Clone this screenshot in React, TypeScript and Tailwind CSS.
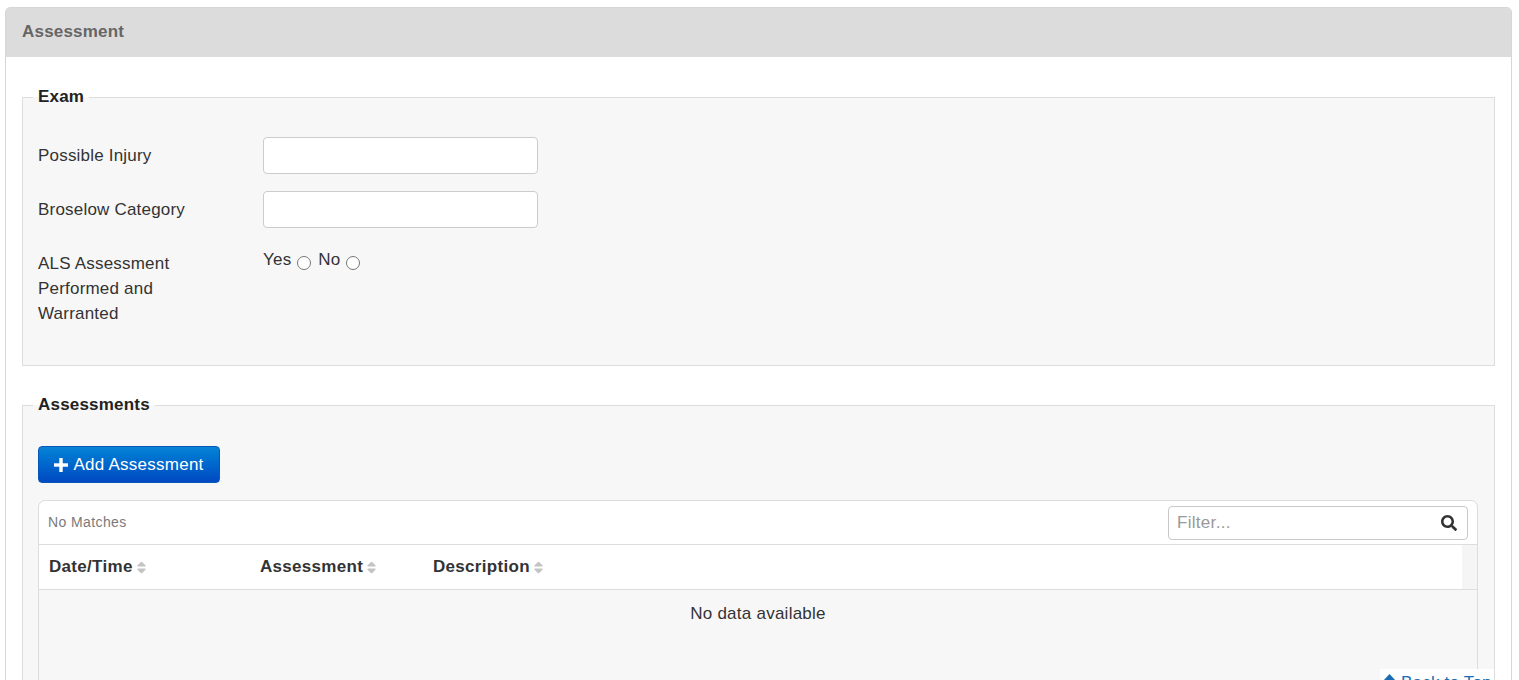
import React from "react";
import { FaSearch, FaSort } from "react-icons/fa";

function Radio() {
  return (
    <span className="inline-block w-[14px] h-[14px] rounded-full border border-[#767676] bg-white align-[-5px] ml-[6px] mr-[7px]" />
  );
}

function SortHeader({ label, width }: { label: string; width: string }) {
  return (
    <div className={`${width} flex items-center pl-[10px] shrink-0`}>
      <span className="text-[17px] tracking-[0.3px] font-bold text-[#333]">{label}</span>
      <FaSort className="ml-[3px] text-[#c4c4c4] w-[11px] h-[15px]" />
    </div>
  );
}

export default function App() {
  return (
    <div className="font-['Liberation_Sans',Arial,sans-serif] text-[#333] bg-white min-h-[700px] pt-[7px] pl-[5px]">
      <div className="w-[1507px] border border-[#d6d6d6] rounded-t-[5px] bg-white">
        <div className="h-[49px] bg-[#dcdcdc] rounded-t-[4px] flex items-center px-[16px] pb-[1px]">
          <span className="text-[17px] tracking-[0.2px] font-bold text-[#666]">Assessment</span>
        </div>
        <div className="px-[16px] pt-[30px] pb-[40px]">
          {/* Exam */}
          <fieldset className="border border-[#dddddd] bg-[#f7f7f7] pl-[10px] pr-[16px] pb-[39px] m-0">
            <legend className="px-[5px] text-[17px] tracking-[0.2px] leading-[20px] font-bold text-[#222]">Exam</legend>
            <div className="pl-[5px] text-[17px] tracking-[0.2px]">
              <div className="flex items-center h-[37px] mt-[30px]">
                <div className="w-[225px]">Possible Injury</div>
                <input className="w-[275px] h-[37px] bg-white border border-[#cccccc] rounded-[4px] outline-none" />
              </div>
              <div className="flex items-center h-[37px] mt-[17px]">
                <div className="w-[225px]">Broselow Category</div>
                <input className="w-[275px] h-[37px] bg-white border border-[#cccccc] rounded-[4px] outline-none" />
              </div>
              <div className="flex mt-[23px]">
                <div className="w-[225px] leading-[25px]">
                  ALS Assessment
                  <br />
                  Performed and
                  <br />
                  Warranted
                </div>
                <div className="leading-[18px]">
                  Yes
                  <Radio />
                  No
                  <Radio />
                </div>
              </div>
            </div>
          </fieldset>

          {/* Assessments */}
          <fieldset className="border border-[#dddddd] bg-[#f7f7f7] pl-[10px] pr-[16px] pb-[40px] m-0 mt-[29px]">
            <legend className="px-[5px] text-[17px] tracking-[0.2px] leading-[20px] font-bold text-[#222]">Assessments</legend>
            <div className="pl-[5px]">
              <button className="mt-[31px] h-[37px] w-[182px] rounded-[4px] border border-[#0657b8] bg-gradient-to-b from-[#0a83d6] to-[#0048c2] text-white text-[17px] tracking-[0.25px] flex items-center justify-center gap-[5px]">
                <svg width="14" height="14" viewBox="0 0 14 14">
                  <rect x="5.3" y="0" width="3.4" height="14" fill="white" />
                  <rect x="0" y="5.3" width="14" height="3.4" fill="white" />
                </svg>
                <span>Add Assessment</span>
              </button>

              <div className="mt-[17px] border border-[#dddddd] rounded-t-[7px] bg-[#f7f7f7]">
                <div className="h-[43px] bg-white rounded-t-[7px] flex items-center justify-between pl-[9px] pr-[9px]">
                  <span className="text-[14px] tracking-[0.4px] text-[#7a7a7a]">No Matches</span>
                  <div className="w-[300px] h-[34px] border border-[#c8c8c8] rounded-[4px] bg-white flex items-center justify-between pl-[8px] pr-[10px]">
                    <span className="text-[17px] tracking-[0.3px] text-[#999]">Filter...</span>
                    <FaSearch className="w-[16px] h-[16px] text-[#333]" />
                  </div>
                </div>
                <div className="flex h-[46px] border-t border-b border-[#dddddd] bg-white">
                  <SortHeader label="Date/Time" width="w-[211px]" />
                  <SortHeader label="Assessment" width="w-[173px]" />
                  <SortHeader label="Description" width="w-[200px]" />
                  <div className="flex-1" />
                  <div className="w-[15px] bg-[#f5f5f5]" />
                </div>
                <div className="pt-[13px] pb-[80px] text-center text-[17px] tracking-[0.25px] leading-[22px]">No data available</div>
              </div>
            </div>
          </fieldset>
        </div>
      </div>

      <div className="fixed left-[1380px] top-[669px] w-[114px] h-[30px] bg-white overflow-hidden whitespace-nowrap flex items-start pt-[1px] pl-[3px] text-[17px] tracking-[0.2px] text-[#1a6db3]">
        <svg width="13" height="10" viewBox="0 0 13 10" className="mt-[4px] mr-[5px] shrink-0">
          <path d="M6.5 0 L13 7 L0 7 Z" fill="#1a6db3" />
        </svg>
        <span>Back to Top</span>
      </div>
    </div>
  );
}
